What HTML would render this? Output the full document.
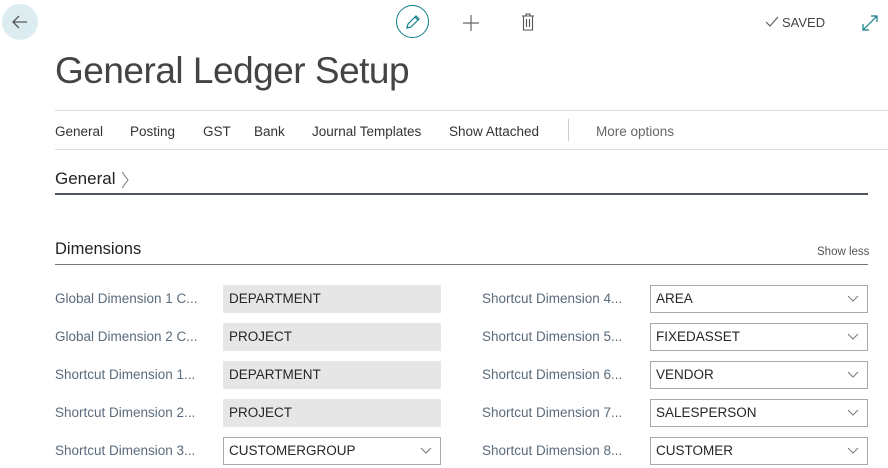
<!DOCTYPE html>
<html><head><style>
body{margin:0;width:888px;height:468px;background:#fff;font-family:"Liberation Sans",sans-serif;position:relative;overflow:hidden;color:#212121}
.a{position:absolute}
.lab{position:absolute;font-size:13.5px;color:#5b6b7b;white-space:nowrap}
.box{position:absolute;width:218px;height:28px;box-sizing:border-box;font-size:13.5px;line-height:28px;padding-left:6px;color:#262626}
.ro{background:#e6e6e6}
.dd{border:1px solid #a9a9a9;background:#fff;line-height:26px;padding-left:5px}
.dd svg{position:absolute;right:8px;top:9px}
.tab{position:absolute;top:124px;font-size:13.5px;color:#333}
</style></head><body>
<div class="a" style="left:2px;top:4px;width:36px;height:36px;border-radius:50%;background:#dcedf2"></div>
<svg class="a" style="left:10px;top:12px" width="20" height="20" viewBox="0 0 20 20"><path d="M17 10H3M9 4L3 10l6 6" stroke="#555" stroke-width="1.3" fill="none"/></svg>
<div class="a" style="left:396px;top:5px;width:33px;height:33px;border-radius:50%;border:1px solid #0f7f86;box-sizing:border-box"></div>
<svg class="a" style="left:404px;top:13px" width="18" height="18" viewBox="0 0 18 18"><path d="M3 15l1-4 8-8 3 3-8 8z M11 4l3 3" stroke="#0f7f86" stroke-width="1.2" fill="none"/></svg>
<svg class="a" style="left:462px;top:14px" width="18" height="18" viewBox="0 0 18 18"><path d="M9 1v16M1 9h16" stroke="#666" stroke-width="1.2"/></svg>
<svg class="a" style="left:521px;top:13px" width="14" height="18" viewBox="0 0 14 18"><path d="M1 3h12M5 3V1h4v2M2.5 3v14h9V3M5.5 6v8M8.5 6v8" stroke="#555" stroke-width="1.1" fill="none"/></svg>
<svg class="a" style="left:765px;top:16px" width="14" height="12" viewBox="0 0 14 12"><path d="M1 6l4 4 8-9" stroke="#555" stroke-width="1.1" fill="none"/></svg>
<div class="a" style="left:782px;top:15px;font-size:13px;color:#444">SAVED</div>
<svg class="a" style="left:861px;top:14px" width="18" height="18" viewBox="0 0 18 18"><path d="M2 16L16 2M10 2h6v6M2 10v6h6" stroke="#0f7f86" stroke-width="1.2" fill="none"/></svg>
<div class="a" style="left:55px;top:50px;font-size:37px;color:#444;letter-spacing:-0.5px">General Ledger Setup</div>
<div class="a" style="left:55px;top:110px;width:833px;height:1px;background:#ddd"></div>
<div class="tab" style="left:55px">General</div>
<div class="tab" style="left:130px">Posting</div>
<div class="tab" style="left:203px">GST</div>
<div class="tab" style="left:254px">Bank</div>
<div class="tab" style="left:312px">Journal Templates</div>
<div class="tab" style="left:449px">Show Attached</div>
<div class="a" style="left:568px;top:119px;width:1px;height:22px;background:#ccc"></div>
<div class="tab" style="left:596px;color:#666">More options</div>
<div class="a" style="left:55px;top:149px;width:833px;height:1px;background:#ddd"></div>
<div class="a" style="left:55px;top:169px;font-size:17px;line-height:20px;color:#222">General</div>
<svg class="a" style="left:120px;top:171px" width="10" height="18" viewBox="0 0 10 18"><path d="M2 1l6 8-6 8" stroke="#888" stroke-width="1.1" fill="none"/></svg>
<div class="a" style="left:55px;top:193px;width:813px;height:2px;background:#4f5661"></div>
<div class="a" style="left:55px;top:240px;font-size:16.5px;color:#222">Dimensions</div>
<div class="a" style="left:817px;top:246px;font-size:11.5px;color:#555">Show less</div>
<div class="a" style="left:55px;top:264px;width:813px;height:1px;background:#777"></div>

<div class="lab" style="left:55px;top:291px">Global Dimension 1 C...</div><div class="box ro" style="left:223px;top:285px">DEPARTMENT</div>
<div class="lab" style="left:55px;top:329px">Global Dimension 2 C...</div><div class="box ro" style="left:223px;top:323px">PROJECT</div>
<div class="lab" style="left:55px;top:367px">Shortcut Dimension 1...</div><div class="box ro" style="left:223px;top:361px">DEPARTMENT</div>
<div class="lab" style="left:55px;top:405px">Shortcut Dimension 2...</div><div class="box ro" style="left:223px;top:399px">PROJECT</div>
<div class="lab" style="left:55px;top:443px">Shortcut Dimension 3...</div><div class="box dd" style="left:223px;top:437px">CUSTOMERGROUP<svg width="12" height="8"><path d="M1 1l5 5 5-5" stroke="#777" fill="none"/></svg></div>

<div class="lab" style="left:482px;top:291px">Shortcut Dimension 4...</div><div class="box dd" style="left:650px;top:285px">AREA<svg width="12" height="8"><path d="M1 1l5 5 5-5" stroke="#777" fill="none"/></svg></div>
<div class="lab" style="left:482px;top:329px">Shortcut Dimension 5...</div><div class="box dd" style="left:650px;top:323px">FIXEDASSET<svg width="12" height="8"><path d="M1 1l5 5 5-5" stroke="#777" fill="none"/></svg></div>
<div class="lab" style="left:482px;top:367px">Shortcut Dimension 6...</div><div class="box dd" style="left:650px;top:361px">VENDOR<svg width="12" height="8"><path d="M1 1l5 5 5-5" stroke="#777" fill="none"/></svg></div>
<div class="lab" style="left:482px;top:405px">Shortcut Dimension 7...</div><div class="box dd" style="left:650px;top:399px">SALESPERSON<svg width="12" height="8"><path d="M1 1l5 5 5-5" stroke="#777" fill="none"/></svg></div>
<div class="lab" style="left:482px;top:443px">Shortcut Dimension 8...</div><div class="box dd" style="left:650px;top:437px">CUSTOMER<svg width="12" height="8"><path d="M1 1l5 5 5-5" stroke="#777" fill="none"/></svg></div>
</body></html>
